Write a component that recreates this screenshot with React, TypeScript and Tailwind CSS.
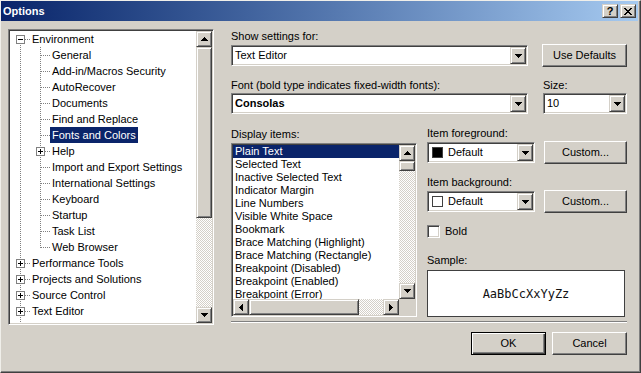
import React from "react";

const raised =
  "border border-t-white border-l-white border-r-[#404040] border-b-[#404040] shadow-[inset_-1px_-1px_0_#808080]";
const raisedSmall =
  "border border-t-[#d4d0c8] border-l-[#d4d0c8] border-r-[#404040] border-b-[#404040] shadow-[inset_1px_1px_0_#ffffff,inset_-1px_-1px_0_#808080]";
const sunken =
  "border border-t-[#808080] border-l-[#808080] border-r-white border-b-white shadow-[inset_1px_1px_0_#404040,inset_-1px_-1px_0_#d4d0c8] p-[1px]";
const checker =
  "bg-[repeating-conic-gradient(#ffffff_0_25%,#d4d0c8_0_50%)] bg-[length:2px_2px]";

function Arrow({ dir }: { dir: "up" | "down" | "left" | "right" }) {
  if (dir === "down")
    return (
      <svg width="7" height="4" className="block">
        <path d="M0 0h7v1H0zM1 1h5v1H1zM2 2h3v1H2zM3 3h1v1H3z" fill="#000" />
      </svg>
    );
  if (dir === "up")
    return (
      <svg width="7" height="4" className="block">
        <path d="M3 0h1v1H3zM2 1h3v1H2zM1 2h5v1H1zM0 3h7v1H0z" fill="#000" />
      </svg>
    );
  if (dir === "left")
    return (
      <svg width="4" height="7" className="block">
        <path d="M0 3h1v1H0zM1 2h1v3H1zM2 1h1v5H2zM3 0h1v7H3z" fill="#000" />
      </svg>
    );
  return (
    <svg width="4" height="7" className="block">
      <path d="M0 0h1v7H0zM1 1h1v5H1zM2 2h1v3H2zM3 3h1v1H3z" fill="#000" />
    </svg>
  );
}

function ArrowBtn({ dir, className }: { dir: "up" | "down" | "left" | "right"; className: string }) {
  return (
    <div className={`${raisedSmall} ${className} flex shrink-0 items-center justify-center bg-[#d4d0c8]`}>
      <Arrow dir={dir} />
    </div>
  );
}

function Button({ className, children, isDefault }: { className: string; children: React.ReactNode; isDefault?: boolean }) {
  return (
    <div
      className={`${
        isDefault
          ? "border border-black shadow-[inset_1px_1px_0_#ffffff,inset_-1px_-1px_0_#404040,inset_-2px_-2px_0_#808080]"
          : raised
      } ${className} flex shrink-0 items-center justify-center bg-[#d4d0c8]`}
    >
      {children}
    </div>
  );
}

function Combo({ className, children }: { className: string; children: React.ReactNode }) {
  return (
    <div className={`${sunken} ${className} flex h-[21px] shrink-0 bg-white`}>
      <div className="flex min-w-0 flex-1 items-center pl-[2px] leading-[17px]">{children}</div>
      <ArrowBtn dir="down" className="h-full w-[16px]" />
    </div>
  );
}

type Kind = "line" | "tee" | "elbow" | "first" | "blank";

function TreeCell({ kind, box }: { kind: Kind; box?: "plus" | "minus" }) {
  const dot = { stroke: "#808080", strokeDasharray: "1 1" };
  return (
    <svg width="20" height="16" className="block shrink-0">
      {(kind === "line" || kind === "tee") && <line x1="10.5" y1="0" x2="10.5" y2="16" {...dot} />}
      {kind === "elbow" && <line x1="10.5" y1="0" x2="10.5" y2="9" {...dot} />}
      {kind === "first" && <line x1="10.5" y1="8" x2="10.5" y2="16" {...dot} />}
      {kind !== "line" && kind !== "blank" && <line x1="11" y1="8.5" x2="20" y2="8.5" {...dot} />}
      {box && (
        <g>
          <rect x="6.5" y="4.5" width="8" height="8" fill="#ffffff" stroke="#808080" />
          <path d="M8 8h5v1H8z" fill="#000" />
          {box === "plus" && <path d="M10 6h1v5h-1z" fill="#000" />}
        </g>
      )}
    </svg>
  );
}

type TreeRow = { label: string; cells: [Kind, ("plus" | "minus")?][]; selected?: boolean };

const treeRows: TreeRow[] = [
  { label: "Environment", cells: [["first", "minus"]] },
  { label: "General", cells: [["line"], ["tee"]] },
  { label: "Add-in/Macros Security", cells: [["line"], ["tee"]] },
  { label: "AutoRecover", cells: [["line"], ["tee"]] },
  { label: "Documents", cells: [["line"], ["tee"]] },
  { label: "Find and Replace", cells: [["line"], ["tee"]] },
  { label: "Fonts and Colors", cells: [["line"], ["tee"]], selected: true },
  { label: "Help", cells: [["line"], ["tee", "plus"]] },
  { label: "Import and Export Settings", cells: [["line"], ["tee"]] },
  { label: "International Settings", cells: [["line"], ["tee"]] },
  { label: "Keyboard", cells: [["line"], ["tee"]] },
  { label: "Startup", cells: [["line"], ["tee"]] },
  { label: "Task List", cells: [["line"], ["tee"]] },
  { label: "Web Browser", cells: [["line"], ["elbow"]] },
  { label: "Performance Tools", cells: [["tee", "plus"]] },
  { label: "Projects and Solutions", cells: [["tee", "plus"]] },
  { label: "Source Control", cells: [["tee", "plus"]] },
  { label: "Text Editor", cells: [["tee", "plus"]] },
  { label: "Database Tools", cells: [["tee", "plus"]] },
];

const displayItems = [
  "Plain Text",
  "Selected Text",
  "Inactive Selected Text",
  "Indicator Margin",
  "Line Numbers",
  "Visible White Space",
  "Bookmark",
  "Brace Matching (Highlight)",
  "Brace Matching (Rectangle)",
  "Breakpoint (Disabled)",
  "Breakpoint (Enabled)",
  "Breakpoint (Error)",
];

function TreeView() {
  return (
    <div className={`${sunken} flex h-[296px] w-[206px] shrink-0 bg-white`}>
      <div className="min-w-0 flex-1 overflow-hidden">
        {treeRows.map((r) => (
          <div key={r.label} className="flex h-[16px] items-center">
            {r.cells.map(([k, b], i) => (
              <TreeCell key={i} kind={k} box={b} />
            ))}
            <span
              className={`whitespace-nowrap px-[2px] leading-[16px] ${
                r.selected ? "bg-[#0a246a] text-white" : ""
              }`}
            >
              {r.label}
            </span>
          </div>
        ))}
      </div>
      <div className="flex w-[16px] flex-col">
        <ArrowBtn dir="up" className="h-[16px] w-[16px]" />
        <div className={`${raisedSmall} h-[171px] bg-[#d4d0c8]`} />
        <div className={`flex-1 ${checker}`} />
        <ArrowBtn dir="down" className="h-[16px] w-[16px]" />
      </div>
    </div>
  );
}

function ListBox() {
  return (
    <div className={`${sunken} mt-[2px] grid h-[174px] w-[186px] grid-cols-[166px_16px] grid-rows-[154px_16px] bg-white`}>
      <div className="overflow-hidden">
        {displayItems.map((t, i) => (
          <div
            key={t}
            className={`h-[13px] whitespace-nowrap px-[2px] leading-[13px] ${
              i === 0 ? "bg-[#0a246a] text-white" : ""
            }`}
          >
            {t}
          </div>
        ))}
      </div>
      <div className="flex flex-col">
        <ArrowBtn dir="up" className="h-[16px] w-[16px]" />
        <div className={`${raisedSmall} h-[10px] bg-[#d4d0c8]`} />
        <div className={`flex-1 ${checker}`} />
        <ArrowBtn dir="down" className="h-[16px] w-[16px]" />
      </div>
      <div className="flex">
        <ArrowBtn dir="left" className="h-[16px] w-[16px]" />
        <div className={`${raisedSmall} w-[110px] bg-[#d4d0c8]`} />
        <div className={`flex-1 ${checker}`} />
        <ArrowBtn dir="right" className="h-[16px] w-[16px]" />
      </div>
      <div className="bg-[#d4d0c8]" />
    </div>
  );
}

function ColorRow({ swatch }: { swatch: string }) {
  return (
    <div className="mt-[1px] flex h-[23px] items-center justify-between">
      <Combo className="w-[108px]">
        <span className={`ml-[1px] h-[11px] w-[11px] shrink-0 border border-[#404040] ${swatch}`} />
        <span className="ml-[5px]">Default</span>
      </Combo>
      <Button className="h-[23px] w-[83px]">Custom...</Button>
    </div>
  );
}

export default function App() {
  return (
    <div className="h-[373px] w-[641px] overflow-hidden border-t border-l border-r border-b border-t-[#f0efea] border-l-[#f0efea] border-r-[#404040] border-b-[#404040] bg-[#d4d0c8] pr-[2px] font-['Liberation_Sans',Arial,sans-serif] text-[11px] text-black shadow-[inset_-1px_-1px_0_#808080]">
      {/* title bar */}
      <div className="flex h-[20px] items-center justify-between bg-gradient-to-r from-[#0a246a] to-[#a6caf0] pl-[2px] pr-[2px]">
        <span className="font-bold text-white">Options</span>
        <div className="flex gap-[2px]">
          <div className={`${raisedSmall} flex h-[14px] w-[16px] items-center justify-center bg-[#d4d0c8] text-[11px] font-bold leading-none`}>
            ?
          </div>
          <div className={`${raisedSmall} flex h-[14px] w-[16px] items-center justify-center bg-[#d4d0c8]`}>
            <svg width="8" height="7" className="block">
              <path
                d="M0 0h2v1H0zM6 0h2v1H6zM1 1h2v1H1zM5 1h2v1H5zM2 2h4v1H2zM3 3h2v1H3zM2 4h4v1H2zM1 5h2v1H1zM5 5h2v1H5zM0 6h2v1H0zM6 6h2v1H6z"
                fill="#000"
              />
            </svg>
          </div>
        </div>
      </div>

      {/* body */}
      <div className="flex gap-[17px] pl-[7px] pt-[8px]">
        <TreeView />

        <div className="flex w-[396px] flex-col">
          <div className="h-[14px] leading-[14px]">Show settings for:</div>
          <div className="mt-[1px] flex h-[23px] items-center justify-between">
            <Combo className="w-[297px]">Text Editor</Combo>
            <Button className="h-[23px] w-[85px]">Use Defaults</Button>
          </div>

          <div className="mt-[11px] flex h-[14px] leading-[14px]">
            <span className="w-[312px]">Font (bold type indicates fixed-width fonts):</span>
            <span>Size:</span>
          </div>
          <div className="mt-[1px] flex h-[21px] justify-between">
            <Combo className="w-[297px]">
              <span className="font-bold">Consolas</span>
            </Combo>
            <Combo className="w-[84px]">10</Combo>
          </div>

          <div className="mt-[12px] flex gap-[10px]">
            <div className="flex w-[186px] flex-col">
              <div className="mt-[1px] h-[14px] leading-[14px]">Display items:</div>
              <ListBox />
            </div>

            <div className="flex w-[200px] flex-col">
              <div className="h-[14px] leading-[14px]">Item foreground:</div>
              <ColorRow swatch="bg-black" />
              <div className="mt-[11px] h-[14px] leading-[14px]">Item background:</div>
              <ColorRow swatch="bg-white" />
              <div className="mt-[12px] flex h-[13px] items-center">
                <div className={`${sunken} h-[13px] w-[13px] bg-white`} />
                <span className="ml-[5px] leading-[13px]">Bold</span>
              </div>
              <div className="mt-[15px] h-[14px] leading-[14px]">Sample:</div>
              <div className="mt-[3px] flex h-[47px] w-[198px] items-center justify-center border border-[#404040] bg-white font-['DejaVu_Sans_Mono',monospace] text-[12px] text-[#111]">
                AaBbCcXxYyZz
              </div>
            </div>
          </div>

          <div className="mt-[4px] h-[2px] border-t border-b border-t-[#808080] border-b-white" />

          <div className="mt-[9px] flex justify-end gap-[6px]">
            <Button isDefault className="h-[23px] w-[75px]">OK</Button>
            <Button className="h-[23px] w-[75px]">Cancel</Button>
          </div>
        </div>
      </div>
    </div>
  );
}
